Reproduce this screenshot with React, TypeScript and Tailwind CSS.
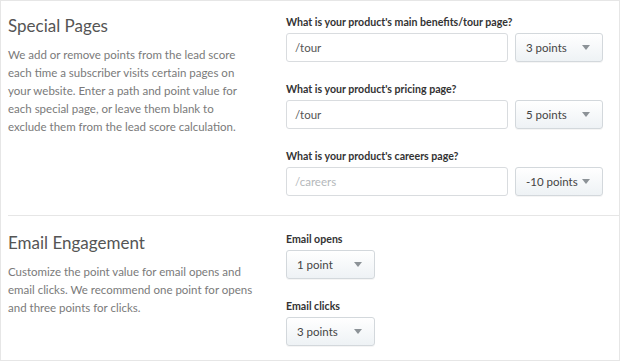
import React from 'react';

const font = { fontFamily: 'Lato, "Open Sans", Arial, sans-serif' };

function Caret() {
  return (
    <svg width="8" height="5" viewBox="0 0 8 5" className="shrink-0">
      <path d="M0 0h8L4 5z" fill="#8c9297" />
    </svg>
  );
}

function PointSelect({ value, width = 'w-[88px]' }: { value: string; width?: string }) {
  return (
    <div
      className={`${width} h-[29px] shrink-0 flex items-center justify-between pl-[10px] pr-[12px] rounded-[3px] border border-[#d3d8dc] bg-gradient-to-b from-white to-[#eef2f5] text-[11.5px] text-[#444] shadow-[0_1px_0_rgba(0,0,0,0.04)]`}
    >
      <span>{value}</span>
      <Caret />
    </div>
  );
}

function PathInput({ value, placeholder }: { value?: string; placeholder?: string }) {
  return (
    <div className="w-[222px] h-[29px] flex items-center px-[8px] rounded-[3px] border border-[#d9dcdf] bg-white text-[11.5px]">
      {value ? (
        <span className="text-[#555]">{value}</span>
      ) : (
        <span className="text-[#b4b8bb]">{placeholder}</span>
      )}
    </div>
  );
}

function Field({ label, children, first }: { label: string; children: React.ReactNode; first?: boolean }) {
  return (
    <div className={first ? '' : 'mt-[19px]'}>
      <div className="h-4 leading-4 mb-[3px] text-[10.6px] font-bold text-[#333]">{label}</div>
      <div className="flex gap-[7px]">{children}</div>
    </div>
  );
}

const pages = [
  { label: "What is your product's main benefits/tour page?", value: '/tour', points: '3 points' },
  { label: "What is your product's pricing page?", value: '/tour', points: '5 points' },
  { label: "What is your product's careers page?", placeholder: '/careers', points: '-10 points' },
];

export default function App() {
  return (
    <div className="w-[620px] h-[361px] bg-white" style={font}>
      <div className="h-full border border-[#e6e6e6] pl-[7px]">
        <section className="flex border-b border-[#e6e6e6] pt-[13px] pb-[19px]">
          <div className="w-[278px]">
            <h2 className="h-6 leading-6 text-[17px] text-[#555]">Special Pages</h2>
            <p className="mt-[8px] text-[11.5px] leading-[18px] text-[#7a7a7a]">
              We add or remove points from the lead score
              <br />
              each time a subscriber visits certain pages on
              <br />
              your website. Enter a path and point value for
              <br />
              each special page, or leave them blank to
              <br />
              exclude them from the lead score calculation.
            </p>
          </div>
          <div>
            {pages.map((p, i) => (
              <Field key={p.label} label={p.label} first={i === 0}>
                <PathInput value={p.value} placeholder={p.placeholder} />
                <PointSelect value={p.points} />
              </Field>
            ))}
          </div>
        </section>

        <section className="flex pt-[15px]">
          <div className="w-[278px]">
            <h2 className="h-6 leading-6 text-[17px] text-[#555]">Email Engagement</h2>
            <p className="mt-[8px] text-[11.5px] leading-[18px] text-[#7a7a7a]">
              Customize the point value for email opens and
              <br />
              email clicks. We recommend one point for opens
              <br />
              and three points for clicks.
            </p>
          </div>
          <div>
            <Field label="Email opens" first>
              <PointSelect value="1 point" width="w-[89px]" />
            </Field>
            <Field label="Email clicks">
              <PointSelect value="3 points" width="w-[89px]" />
            </Field>
          </div>
        </section>
      </div>
    </div>
  );
}
